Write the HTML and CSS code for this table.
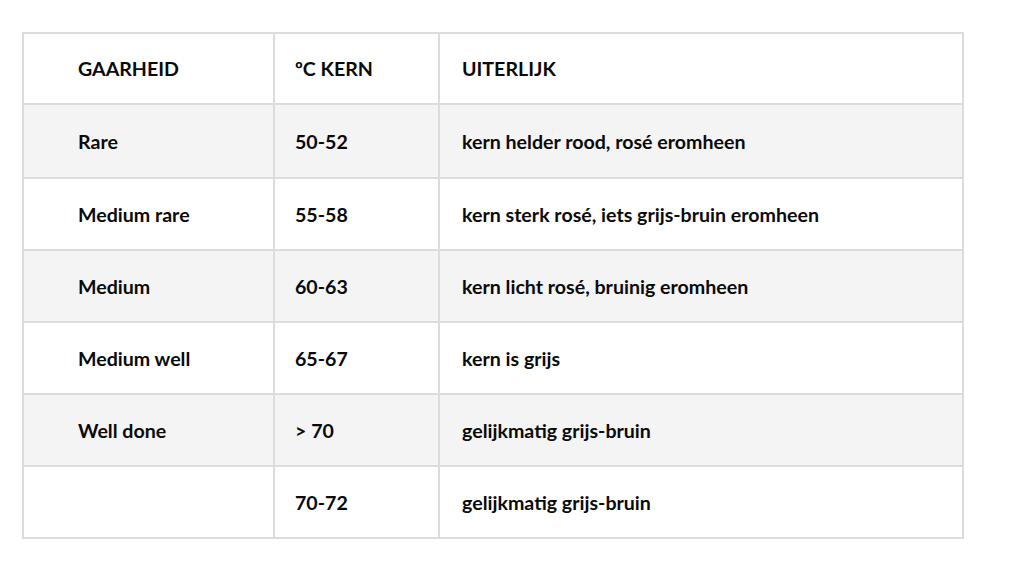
FILE: index.html
```html
<!DOCTYPE html>
<html>
<head>
<meta charset="utf-8">
<link rel="stylesheet" href="styles.css">
</head>
<body>
<div class="page">
<table class="doneness">
  <colgroup><col class="c1"><col class="c2"><col class="c3"></colgroup>
  <thead>
    <tr><th class="first">GAARHEID</th><th class="second">ºC KERN</th><th class="third">UITERLIJK</th></tr>
  </thead>
  <tbody>
    <tr class="alt"><td class="first">Rare</td><td class="second">50-52</td><td class="third">kern helder rood, rosé eromheen</td></tr>
    <tr><td class="first">Medium rare</td><td class="second">55-58</td><td class="third">kern sterk rosé, iets grijs-bruin eromheen</td></tr>
    <tr class="alt"><td class="first">Medium</td><td class="second">60-63</td><td class="third">kern licht rosé, bruinig eromheen</td></tr>
    <tr><td class="first">Medium well</td><td class="second">65-67</td><td class="third">kern is grijs</td></tr>
    <tr class="alt"><td class="first">Well done</td><td class="second">&gt; 70</td><td class="third">gelijkmatig grijs-bruin</td></tr>
    <tr><td class="first"></td><td class="second">70-72</td><td class="third">gelijkmatig grijs-bruin</td></tr>
  </tbody>
</table>
</div>
</body>
</html>
```
FILE: styles.css
```css
html, body {
  margin: 0;
  padding: 0;
  background: #ffffff;
}
.page {
  padding: 32px 0 0 22px;
}
.doneness {
  border-collapse: collapse;
  table-layout: fixed;
  width: 940px;
  font-family: Lato, "Open Sans", "Liberation Sans", sans-serif;
  font-weight: 700;
  font-size: 19.6px;
  color: #0a0a0a;
}
.c1 { width: 251px; }
.c2 { width: 165px; }
.c3 { width: 524px; }
.doneness th, .doneness td {
  border: 2px solid #dcdcdc;
  height: 70px;
  padding: 0;
  text-align: left;
  vertical-align: middle;
  font-weight: 700;
  white-space: nowrap;
}
.doneness thead th { height: 69px; }
.doneness tbody tr:first-child td { height: 72px; }
.doneness th.first, .doneness td.first { padding-left: 54px; }
.doneness th.second, .doneness td.second { padding-left: 20px; }
.doneness th.third, .doneness td.third { padding-left: 22px; }
.doneness tr.alt td { background: #f4f4f4; }
```
